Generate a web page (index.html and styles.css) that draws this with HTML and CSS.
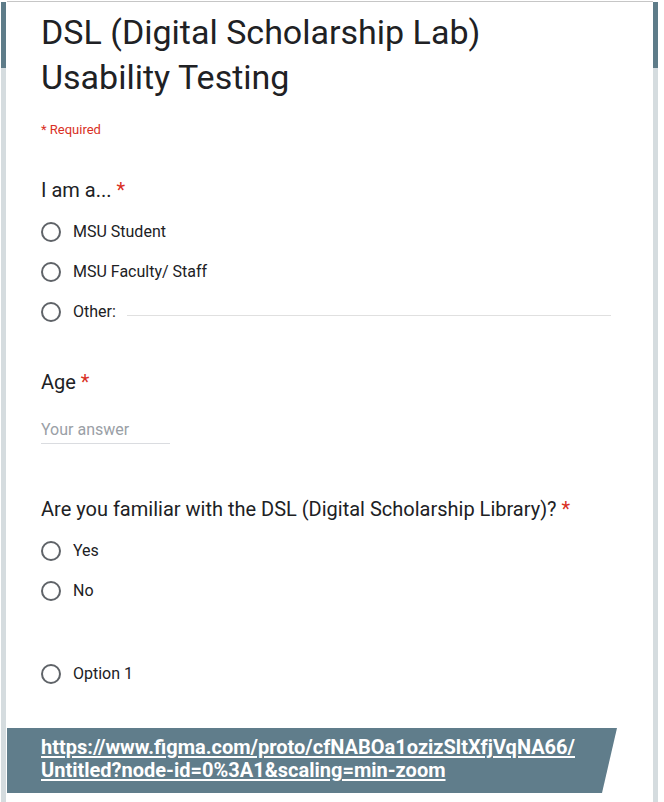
FILE: index.html
```html
<!DOCTYPE html>
<html lang="en">
<head>
<meta charset="utf-8">
<title>DSL Usability Testing</title>
<link rel="stylesheet" href="styles.css">
</head>
<body>
<div class="page">
  <div class="rail"></div>
  <main class="sheet">
    <h1 class="title">DSL (Digital Scholarship Lab)<br>Usability Testing</h1>
    <p class="required">* Required</p>

    <section class="q q-first">
      <h2 class="q-title">I am a... <span class="star">*</span></h2>
      <div class="opt"><span class="radio"></span><span class="label">MSU Student</span></div>
      <div class="opt"><span class="radio"></span><span class="label">MSU Faculty/ Staff</span></div>
      <div class="opt"><span class="radio"></span><span class="label">Other:</span><span class="other-line"></span></div>
    </section>

    <section class="q q-age">
      <h2 class="q-title">Age <span class="star">*</span></h2>
      <div class="answer">Your answer</div>
    </section>

    <section class="q q-dsl">
      <h2 class="q-title">Are you familiar with the DSL (Digital Scholarship Library)? <span class="star">*</span></h2>
      <div class="opt"><span class="radio"></span><span class="label">Yes</span></div>
      <div class="opt"><span class="radio"></span><span class="label">No</span></div>
      <div class="opt opt-gap"><span class="radio"></span><span class="label">Option 1</span></div>
    </section>

    <div class="banner">
      <a class="link" href="#">https://www.figma.com/proto/cfNABOa1ozizSltXfjVqNA66/<br>Untitled?node-id=0%3A1&amp;scaling=min-zoom</a>
    </div>
  </main>
  <div class="rail"></div>
</div>
</body>
</html>
```

FILE: styles.css
```css
html, body {
  margin: 0;
  padding: 0;
  background: #ffffff;
}

body {
  font-family: Roboto, "Liberation Sans", Arial, sans-serif;
  color: #202124;
}

.page {
  display: flex;
  align-items: stretch;
  width: 664px;
  height: 802px;
  padding-left: 1px;
  box-sizing: border-box;
  overflow: hidden;
}

.rail {
  flex: 0 0 5px;
  margin-top: 2px;
  background: linear-gradient(#5e7c89 0, #5e7c89 66px, #d5dcdf 66px, #d5dcdf 100%);
}

.sheet {
  flex: 0 0 646px;
  min-width: 0;
  margin: 1px 0 0 1px;
  border-top: 1px solid #c6c6c6;
  padding: 8px 42px 0 34px;
  box-sizing: border-box;
}

.title {
  margin: 0;
  font-size: 34px;
  line-height: 45px;
  font-weight: 400;
  color: #202124;
}

.required {
  margin: 20px 0 0;
  font-size: 13px;
  line-height: 20px;
  color: #d93025;
}

.q-title {
  margin: 0;
  font-size: 20px;
  line-height: 28px;
  font-weight: 400;
  color: #202124;
}

.star {
  color: #d93025;
}

.q-first { margin-top: 36px; }
.q-age { margin-top: 36px; }
.q-dsl { margin-top: 51px; }

.q-first .q-title,
.q-dsl .q-title {
  margin-bottom: 8px;
}

.opt {
  display: flex;
  align-items: center;
  height: 40px;
}

.opt-gap {
  margin-top: 43px;
}

.radio {
  flex: 0 0 auto;
  width: 20px;
  height: 20px;
  border: 2px solid #5f6368;
  border-radius: 50%;
  box-sizing: border-box;
  margin-right: 12px;
}

.label {
  font-size: 16px;
  line-height: 20px;
  color: #202124;
}

.other-line {
  flex: 1;
  align-self: flex-start;
  height: 24px;
  margin-left: 11px;
  border-bottom: 1px solid #e0e0e0;
  box-sizing: border-box;
}

.answer {
  width: 129px;
  margin-top: 24px;
  padding-bottom: 3px;
  border-bottom: 1px solid #dadce0;
  font-size: 16px;
  line-height: 20px;
  color: #9aa0a6;
}

.banner {
  margin: 34px 0 0 -34px;
  width: 610px;
  height: 65px;
  padding: 8px 0 0 34px;
  box-sizing: border-box;
  background: #607d8b;
  clip-path: polygon(0 0, 100% 0, 595px 100%, 0 100%);
}

.link {
  display: block;
  color: #ffffff;
  font-size: 20px;
  line-height: 23px;
  font-weight: 700;
  text-decoration: underline;
  text-underline-offset: 2px;
  white-space: nowrap;
}
```
